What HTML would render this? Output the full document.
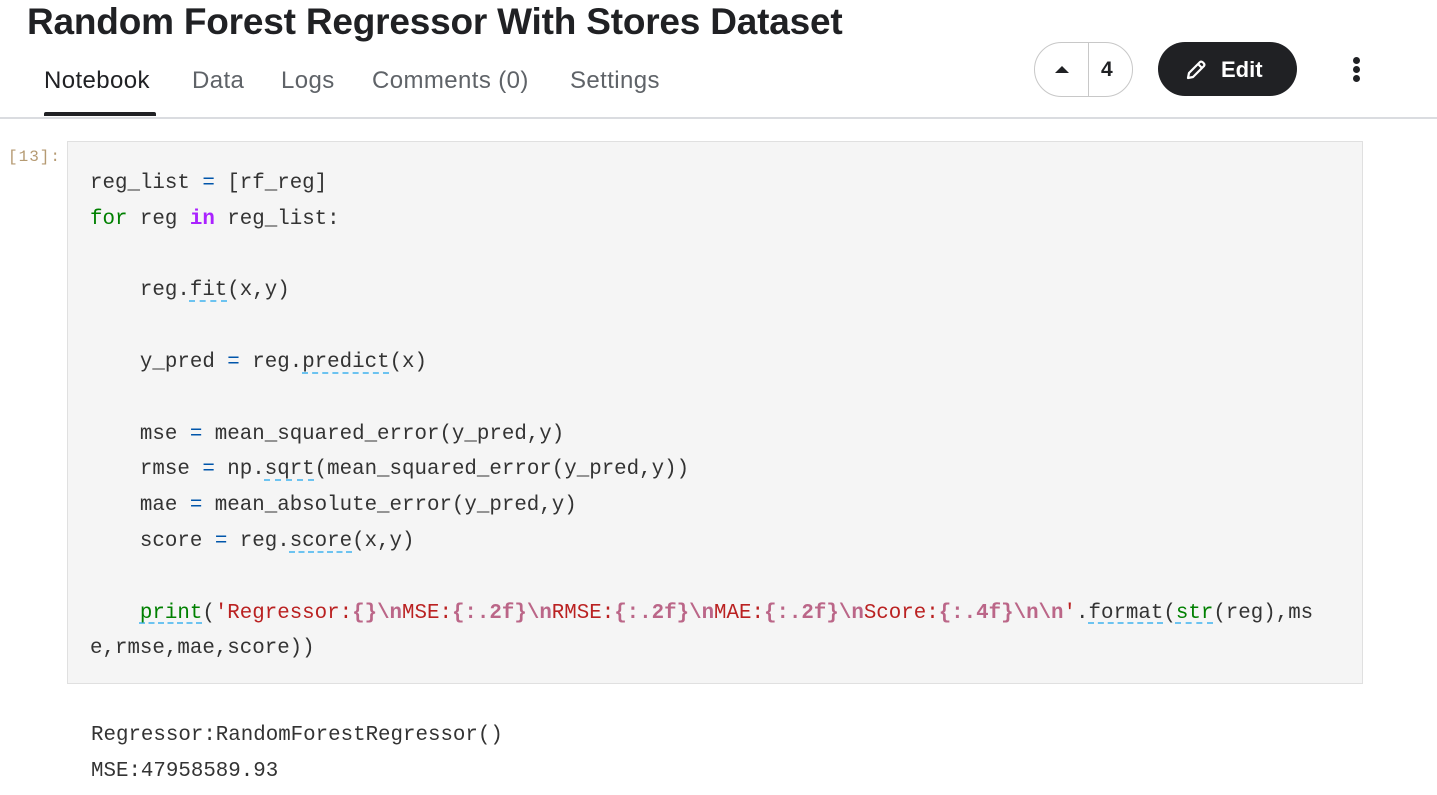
<!DOCTYPE html>
<html><head><meta charset="utf-8"><style>
body{margin:0;width:1437px;height:795px;overflow:hidden;background:#fff;font-family:"Liberation Sans",sans-serif;position:relative}
.title{position:absolute;left:27px;top:0px;font-size:37px;font-weight:bold;color:#202124;line-height:44px;letter-spacing:-0.2px}
.tab{position:absolute;top:66px;font-size:24px;color:#5f6368;line-height:30px;letter-spacing:0.4px}
.ul{position:absolute;left:44px;top:112px;width:112px;height:4px;background:#202124;border-radius:2px 2px 0 0}
.div{position:absolute;left:0;top:117px;width:1437px;height:2px;background:#dadce0}
.vote{position:absolute;left:1034px;top:42px;width:99px;height:55px;border:1px solid #c8c8c8;border-radius:28px;box-sizing:border-box}
.vote .sep{position:absolute;left:53px;top:0;width:1px;height:100%;background:#c8c8c8}
.vote .n{position:absolute;left:66px;top:15px;font-size:21px;font-weight:bold;color:#202124}
.edit{position:absolute;left:1158px;top:42px;width:139px;height:54px;background:#202124;border-radius:27px;color:#fff;font-size:22px;font-weight:bold}
.dot{position:absolute;left:1353px;width:7px;height:7px;border-radius:50%;background:#202124}
.prompt{position:absolute;left:8px;top:148px;font-family:"Liberation Mono",monospace;font-size:16px;color:#b59a72;letter-spacing:1px}
.cell{position:absolute;left:67px;top:141px;width:1296px;height:543px;box-sizing:border-box;background:#f5f5f5;border:1px solid #e0e0e0}
pre{margin:0;font-family:"Liberation Mono",monospace;font-size:20.8px;line-height:35.8px;color:#333}
.code{position:absolute;left:90px;top:166px}
.out{position:absolute;left:91px;top:718px}
.k{color:#008000}.kw{color:#aa22ff;font-weight:bold}.o{color:#0055aa}.s{color:#ba2121}.b{color:#bb6688;font-weight:bold}
.u{text-decoration:underline dashed #6cc3f0;text-underline-offset:5px}
</style></head><body>
<div class="title">Random Forest Regressor With Stores Dataset</div>
<div class="tab" style="left:44px;color:#202124">Notebook</div>
<div class="tab" style="left:192px">Data</div>
<div class="tab" style="left:281px">Logs</div>
<div class="tab" style="left:372px">Comments (0)</div>
<div class="tab" style="left:570px">Settings</div>
<div class="ul"></div><div class="div"></div>
<div class="vote"><svg style="position:absolute;left:20px;top:22px" width="14" height="10"><path d="M0 8 L7 1 L14 8Z" fill="#202124"/></svg><div class="sep"></div><div class="n">4</div></div>
<div class="edit"><svg style="position:absolute;left:26px;top:16px" width="24" height="24" viewBox="0 0 24 24"><path d="M4 20 L5 15 L16 4 Q17.5 3 19 4.5 L19.5 5 Q21 6.5 20 8 L9 19 Z M14 6 L18 10" fill="none" stroke="#fff" stroke-width="2.2" stroke-linejoin="round"/></svg><span style="position:absolute;left:63px;top:15px">Edit</span></div>
<div class="dot" style="top:57px"></div><div class="dot" style="top:66px"></div><div class="dot" style="top:75px"></div>
<div class="prompt">[13]:</div>
<div class="cell"></div>
<pre class="code">reg_list <span class="o">=</span> [rf_reg]
<span class="k">for</span> reg <span class="kw">in</span> reg_list:

    reg.<span class="u">fit</span>(x,y)

    y_pred <span class="o">=</span> reg.<span class="u">predict</span>(x)

    mse <span class="o">=</span> mean_squared_error(y_pred,y)
    rmse <span class="o">=</span> np.<span class="u">sqrt</span>(mean_squared_error(y_pred,y))
    mae <span class="o">=</span> mean_absolute_error(y_pred,y)
    score <span class="o">=</span> reg.<span class="u">score</span>(x,y)

    <span class="k u">print</span>(<span class="s">'Regressor:<span class="b">{}\n</span>MSE:<span class="b">{:.2f}\n</span>RMSE:<span class="b">{:.2f}\n</span>MAE:<span class="b">{:.2f}\n</span>Score:<span class="b">{:.4f}\n\n</span>'</span>.<span class="u">format</span>(<span class="k u">str</span>(reg),ms
e,rmse,mae,score))</pre>
<pre class="out">Regressor:RandomForestRegressor()
MSE:47958589.93</pre>
</body></html>
